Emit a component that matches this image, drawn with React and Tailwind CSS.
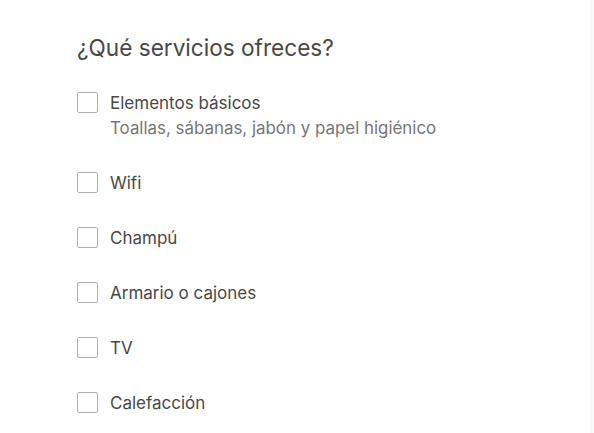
const amenities = [
  { label: "Elementos básicos", hint: "Toallas, sábanas, jabón y papel higiénico" },
  { label: "Wifi" },
  { label: "Champú" },
  { label: "Armario o cajones" },
  { label: "TV" },
  { label: "Calefacción" },
];

const App = () => {
  return (
    <div className="flex min-h-[433px] w-[594px] bg-white font-['Inter',sans-serif] text-[#484848]">
      <div className="flex-1 pl-[77px] pt-[34px]">
        <h2 className="text-[22.6px] leading-[28px] font-normal">¿Qué servicios ofreces?</h2>

        <div className="mt-[29px] space-y-[30px]">
          {amenities.map((item) => (
            <label key={item.label} className="flex items-start gap-3">
              <span className="mt-px h-[21px] w-[21px] shrink-0 rounded-[2px] border border-[#b0b0b0] bg-white" />
              <span className="text-[17px] leading-[25px]">
                <span className="block">{item.label}</span>
                {item.hint && <span className="block text-[16.9px] text-[#767676]">{item.hint}</span>}
              </span>
            </label>
          ))}
        </div>
      </div>
      <div className="w-[4px] bg-[#f9f9f9]" />
    </div>
  );
};

export default App;
